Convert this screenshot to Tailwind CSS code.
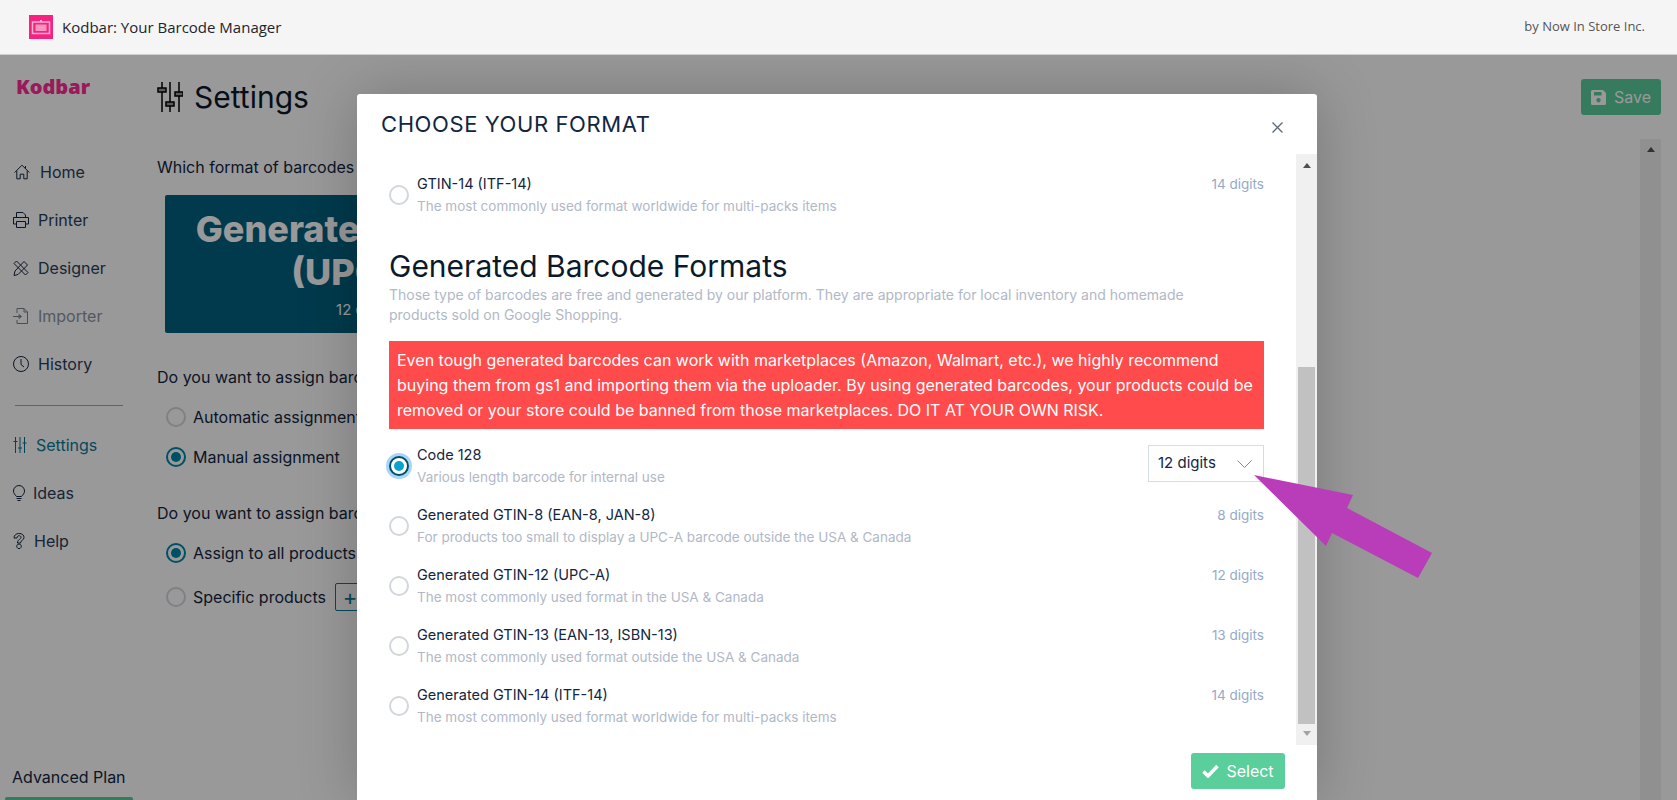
<!DOCTYPE html>
<html lang="en">
<head>
  <meta charset="UTF-8" />
  <title>Kodbar: Your Barcode Manager</title>
  <script src="https://cdn.jsdelivr.net/npm/@tailwindcss/browser@4"></script>
</head>
<body class="relative h-[800px] overflow-hidden bg-white font-['Inter',sans-serif] text-[#12263f]">

  <!-- Top bar -->
  <header class="relative z-20 flex h-[55px] items-center justify-between border-b border-[#cfcfcf] bg-[#f5f5f5] pl-[29px] pr-[32px] font-['Open_Sans',sans-serif]">
    <div class="flex items-center gap-[9px]">
      <svg class="size-[24px]" viewBox="0 0 24 24">
        <rect width="24" height="24" fill="#f5237f"/>
        <rect x="3.5" y="7" width="17" height="11.5" fill="none" stroke="#fbb3d3" stroke-width="1.5"/>
        <rect x="6.5" y="9.5" width="11" height="6.5" fill="#f995c2"/>
        <rect x="11" y="5" width="2" height="2" fill="#fbb3d3"/>
      </svg>
      <span class="text-[15px] text-[#1c2430]">Kodbar: Your Barcode Manager</span>
    </div>
    <span class="text-[13px] text-[#555]">by Now In Store Inc.</span>
  </header>

  <div class="flex h-[745px] overflow-hidden">
    <!-- Sidebar -->
    <aside class="flex h-full w-[157px] shrink-0 flex-col overflow-hidden">
      <div class="pl-[16px] pt-[22px] font-['Open_Sans',sans-serif] text-[20px] font-extrabold leading-[20px] text-[#ff2a96]">Kodbar</div>
      <nav class="mt-[51px] w-[140px] text-[16px]">
        <a class="flex h-[48px] items-center gap-[10px] pl-[14px]">
          <svg class="size-[16px]" viewBox="0 0 16 16" fill="none" stroke="#12263f"><path d="M.7 8.5 8 1.2l7.3 7.3M2.8 6.8v8h3.4v-4.6h3.6v4.6h3.4v-8M11.5 2v2.5"/></svg>
          <span class="text-[#283e5a]">Home</span>
        </a>
        <a class="flex h-[48px] items-center gap-[9px] pl-[13px]">
          <svg class="size-[16px]" viewBox="0 0 16 16" fill="none" stroke="#12263f"><path d="M3.5 5.5v-5h6.5l2.5 2.5v2.5M.5 12V5.5h15V12h-3M3.500 12h-3M3.500 9.500h9v6h-9z"/></svg>
          <span class="text-[#283e5a]">Printer</span>
        </a>
        <a class="flex h-[48px] items-center gap-[9px] pl-[13px]">
          <svg class="size-[16px]" viewBox="0 0 16 16" fill="none" stroke="#12263f"><path d="M1 3.500 3.500 1 15 12.500 12.500 15zM11 1.500 14.500 5 5 14.500l-4 1 1-4.500z"/></svg>
          <span class="text-[#283e5a]">Designer</span>
        </a>
        <a class="flex h-[48px] items-center gap-[9px] pl-[13px]">
          <svg class="size-[16px]" viewBox="0 0 16 16" fill="none" stroke="#7a828c"><path d="M4 5V.5h7l3.500 3.500v11.500H4V12M0 8.500h8M6 6.500l2.500 2-2.500 2zM11 .5V4h3.500"/></svg>
          <span class="text-[#8c95a1]">Importer</span>
        </a>
        <a class="flex h-[48px] items-center gap-[9px] pl-[13px]">
          <svg class="size-[16px]" viewBox="0 0 16 16" fill="none" stroke="#12263f"><circle cx="8" cy="8" r="7.500"/><path d="M8 3v5.500l3 2.500"/></svg>
          <span class="text-[#283e5a]">History</span>
        </a>
        <div class="ml-[15px] mt-[17px] mb-[15px] w-[108px] border-t border-[#9aa7b8]"></div>
        <a class="flex h-[48px] items-center gap-[9px] pl-[13px]">
          <svg class="size-[14px] h-[16px]" viewBox="0 0 14 16" fill="none" stroke="#0b6f8c"><path d="M2.500 0v16M7 0v16M11.500 0v16M.5 4.500h4M5 11h4M9.500 6h4"/></svg>
          <span class="text-[#0b7a99]">Settings</span>
        </a>
        <a class="flex h-[48px] items-center gap-[8px] pl-[13px]">
          <svg class="h-[16px] w-[12px]" viewBox="0 0 12 16" fill="none" stroke="#12263f"><path d="M3.500 11.500C2 9.500.5 8.500.5 6a5.500 5.500 0 0 1 11 0c0 2.500-1.500 3.500-3 5.500zM3.500 13.500h5M4.500 15.500h3"/></svg>
          <span class="text-[#283e5a]">Ideas</span>
        </a>
        <a class="flex h-[48px] items-center gap-[9px] pl-[13px]">
          <svg class="h-[16px] w-[12px]" viewBox="0 0 12 16" fill="none" stroke="#12263f"><path d="M1 5c0-6 10-6 10-.5 0 3-3.500 2.500-3.500 5.500h-3C4.500 6 8 6.500 8 4.500 8 2 4 2 4 5zM6 11a2.300 2.300 0 1 0 .01 0"/></svg>
          <span class="text-[#283e5a]">Help</span>
        </a>
      </nav>
      <div class="mt-auto w-[140px]">
        <div class="pl-[12px] text-[16px] leading-[24px]">Advanced Plan</div>
        <div class="ml-[5px] mt-[8px] h-[3px] w-[128px] rounded-t-[2px] bg-[#5ace9b]"></div>
      </div>
    </aside>

    <!-- Settings page -->
    <main class="flex min-w-0 flex-1 flex-col pr-[16px]">
      <div class="mt-[22px] flex h-[40px] items-center justify-between">
        <h1 class="flex items-center gap-[11px] text-[30px] text-[#0b1a2b]">
          <svg class="h-[30px] w-[26px]" viewBox="0 0 26 30" fill="none" stroke="#000" stroke-width="1.500"><path d="M5 0v30M13 0v30M22 0v30"/><rect x="1" y="6" width="8" height="4" fill="#999"/><rect x="9" y="20" width="8" height="4" fill="#999"/><rect x="18" y="10" width="8" height="4" fill="#999"/></svg>
          Settings
        </h1>
        <button class="flex h-[36px] w-[80px] items-center justify-center gap-[8px] rounded-[3px] bg-[#5ace9b] text-[16px] text-white">
          <svg class="size-[15px]" viewBox="0 0 15 15" fill="#fff"><path d="M1.500 0H12l3 3v10.500a1.500 1.500 0 0 1-1.500 1.500h-12A1.500 1.500 0 0 1 0 13.500v-12A1.500 1.500 0 0 1 1.500 0zM3 2v3.500h7.500V2zm4.500 6a2.200 2.200 0 1 0 .01 0z" fill-rule="evenodd"/></svg>
          Save
        </button>
      </div>
      <div class="flex min-h-0 flex-1">
        <div class="min-w-0 flex-1 text-[16px]">
          <p class="mt-[38px] leading-[24px]">Which format of barcodes do you want to use?</p>
          <div class="ml-[8px] mt-[16px] flex h-[138px] w-[400px] flex-col items-center justify-center rounded-[2px] bg-[#00617f] text-white">
            <div class="text-center text-[36px] font-extrabold leading-[43px] text-white">Generated GTIN-12<br>(UPC-A)</div>
            <div class="mt-[6px] text-[15px] leading-[20px]">12 digits</div>
          </div>
          <p class="mt-[32px] leading-[24px]">Do you want to assign barcodes automatically?</p>
          <label class="ml-[9px] mt-[8px] flex h-[40px] items-center gap-[7px]">
            <span class="size-[20px] rounded-full border-2 border-[#d2d6dd] bg-white"></span>Automatic assignment
          </label>
          <label class="ml-[9px] flex h-[40px] items-center gap-[7px]">
            <span class="flex size-[20px] items-center justify-center rounded-full border-2 border-[#0086a8] bg-white"><span class="size-[10px] rounded-full bg-[#0086a8]"></span></span>Manual assignment
          </label>
          <p class="mt-[24px] leading-[24px]">Do you want to assign barcodes to all products?</p>
          <label class="ml-[9px] mt-[8px] flex h-[40px] items-center gap-[7px]">
            <span class="flex size-[20px] items-center justify-center rounded-full border-2 border-[#0086a8] bg-white"><span class="size-[10px] rounded-full bg-[#0086a8]"></span></span>Assign to all products
          </label>
          <label class="ml-[9px] mt-[4px] flex h-[40px] items-center gap-[7px]">
            <span class="size-[20px] rounded-full border-2 border-[#d2d6dd] bg-white"></span>Specific products
            <span class="ml-[2px] flex h-[28px] w-[30px] items-center justify-center rounded-[2px] border border-[#0b7a99] text-[22px] text-[#0b7a99]">+</span>
          </label>
        </div>
        <div class="mt-[22px] flex w-[21px] shrink-0 justify-center bg-[#f0f0f0] pt-[8px]">
          <span class="h-0 w-0 border-x-[4px] border-b-[5px] border-x-transparent border-b-[#505050]"></span>
        </div>
      </div>
    </main>
  </div>

  <!-- Backdrop -->
  <div class="absolute inset-x-0 bottom-0 top-[55px] z-10 bg-black/40">
    <!-- Modal -->
    <section class="absolute left-[357px] top-[39px] flex h-[706px] w-[960px] flex-col rounded-t-[3px] bg-white shadow-[0_0_60px_rgba(0,0,0,0.22)]">
      <div class="flex h-[60px] shrink-0 items-center justify-between pl-[24px] pr-[34px]">
        <h2 class="text-[22px] leading-[30px] tracking-[0.6px] text-[#12263f]">CHOOSE YOUR FORMAT</h2>
        <svg class="mt-[6px] size-[11px]" viewBox="0 0 11 11" stroke="#5d6773" stroke-width="1.300"><path d="M.5.5l10 10M10.500.5l-10 10"/></svg>
      </div>
      <div class="flex h-[591px] shrink-0">
        <div class="min-w-0 flex-1 overflow-hidden pl-[32px] pr-[32px]">
          <div class="-mt-[49px] flex h-[60px] items-center gap-[8px]">
            <span class="size-[20px] shrink-0 rounded-full border-2 border-[#d2d6dd]"></span>
            <div class="flex-1"><div class="text-[14.500px] leading-[22px]">GTIN-13 (EAN-13, ISBN-13)</div><div class="text-[13.500px] leading-[22px] text-[#b1b8c6]">The most commonly used format outside the USA &amp; Canada</div></div>
            <span class="mt-[8px] self-start text-[13.500px] leading-[22px] text-[#95aac9]">13 digits</span>
          </div>
          <div class="flex h-[60px] items-center gap-[8px]">
            <span class="size-[20px] shrink-0 rounded-full border-2 border-[#d2d6dd]"></span>
            <div class="flex-1"><div class="text-[14.500px] leading-[22px]">GTIN-14 (ITF-14)</div><div class="text-[13.500px] leading-[22px] text-[#b1b8c6]">The most commonly used format worldwide for multi-packs items</div></div>
            <span class="mt-[8px] self-start text-[13.500px] leading-[22px] text-[#95aac9]">14 digits</span>
          </div>
          <h3 class="mt-[22px] text-[30px] leading-[38px] text-[#0b1a2b]">Generated Barcode Formats</h3>
          <p class="text-[14px] leading-[20px] text-[#b1b8c6]">Those type of barcodes are free and generated by our platform. They are appropriate for local inventory and homemade<br>products sold on Google Shopping.</p>
          <div class="mt-[16px] bg-[#ff4b4b] px-[8px] py-[6.500px] text-[16px] leading-[25px] text-white">Even tough generated barcodes can work with marketplaces (Amazon, Walmart, etc.), we highly recommend buying them from gs1 and importing them via the uploader. By using generated barcodes, your products could be removed or your store could be banned from those marketplaces. DO IT AT YOUR OWN RISK.</div>
          <div class="mt-[7px] flex h-[60px] items-center gap-[8px]">
            <span class="flex size-[20px] shrink-0 items-center justify-center rounded-full border-2 border-[#004e68] bg-white shadow-[0_0_0_3px_#a6d5f5]"><span class="size-[10px] rounded-full bg-[#0ba2cc]"></span></span>
            <div class="flex-1"><div class="text-[14.500px] leading-[22px]">Code 128</div><div class="text-[13.500px] leading-[22px] text-[#b1b8c6]">Various length barcode for internal use</div></div>
            <div class="mt-[9px] flex h-[37px] w-[116px] items-center justify-between self-start border border-[#d2ddec] pl-[9px] pr-[11px] text-[15px]">
              12 digits
              <svg class="h-[8px] w-[15px]" viewBox="0 0 15 8" fill="none" stroke="#7e8896"><path d="M.5.5l7 7 7-7"/></svg>
            </div>
          </div>
          <div class="flex h-[60px] items-center gap-[8px]">
            <span class="size-[20px] shrink-0 rounded-full border-2 border-[#d2d6dd]"></span>
            <div class="flex-1"><div class="text-[14.500px] leading-[22px]">Generated GTIN-8 (EAN-8, JAN-8)</div><div class="text-[13.500px] leading-[22px] text-[#b1b8c6]">For products too small to display a UPC-A barcode outside the USA &amp; Canada</div></div>
            <span class="mt-[8px] self-start text-[13.500px] leading-[22px] text-[#95aac9]">8 digits</span>
          </div>
          <div class="flex h-[60px] items-center gap-[8px]">
            <span class="size-[20px] shrink-0 rounded-full border-2 border-[#d2d6dd]"></span>
            <div class="flex-1"><div class="text-[14.500px] leading-[22px]">Generated GTIN-12 (UPC-A)</div><div class="text-[13.500px] leading-[22px] text-[#b1b8c6]">The most commonly used format in the USA &amp; Canada</div></div>
            <span class="mt-[8px] self-start text-[13.500px] leading-[22px] text-[#95aac9]">12 digits</span>
          </div>
          <div class="flex h-[60px] items-center gap-[8px]">
            <span class="size-[20px] shrink-0 rounded-full border-2 border-[#d2d6dd]"></span>
            <div class="flex-1"><div class="text-[14.500px] leading-[22px]">Generated GTIN-13 (EAN-13, ISBN-13)</div><div class="text-[13.500px] leading-[22px] text-[#b1b8c6]">The most commonly used format outside the USA &amp; Canada</div></div>
            <span class="mt-[8px] self-start text-[13.500px] leading-[22px] text-[#95aac9]">13 digits</span>
          </div>
          <div class="flex h-[60px] items-center gap-[8px]">
            <span class="size-[20px] shrink-0 rounded-full border-2 border-[#d2d6dd]"></span>
            <div class="flex-1"><div class="text-[14.500px] leading-[22px]">Generated GTIN-14 (ITF-14)</div><div class="text-[13.500px] leading-[22px] text-[#b1b8c6]">The most commonly used format worldwide for multi-packs items</div></div>
            <span class="mt-[8px] self-start text-[13.500px] leading-[22px] text-[#95aac9]">14 digits</span>
          </div>
        </div>
        <!-- Modal scrollbar -->
        <div class="flex w-[21px] shrink-0 flex-col items-center bg-[#f0f0f0]">
          <span class="mt-[9px] h-0 w-0 border-x-[4px] border-b-[5px] border-x-transparent border-b-[#505050]"></span>
          <span class="mt-[199px] h-[357px] w-[17px] bg-[#c1c1c1]"></span>
          <span class="mt-[7px] h-0 w-0 border-x-[4px] border-t-[5px] border-x-transparent border-t-[#a3a3a3]"></span>
        </div>
      </div>
      <div class="flex justify-end pr-[32px] pt-[8px]">
        <button class="flex h-[36px] w-[94px] items-center justify-center gap-[7px] rounded-[3px] bg-[#5ace9b] text-[16px] text-white">
          <svg class="h-[14px] w-[17px]" viewBox="0 0 17 14" fill="none" stroke="#fff" stroke-width="3.500"><path d="M1.500 7.500 6 12l9.500-10"/></svg>
          Select
        </button>
      </div>
    </section>
  </div>

  <!-- Annotation arrow -->
  <svg class="absolute left-[1254px] top-[475px] z-30 h-[103px] w-[178px]" viewBox="0 0 178 103">
    <polygon points="0,0 99,20 93,33 178,78 164,103 78,58 72,71" fill="#b93db8"/>
  </svg>
</body>
</html>
